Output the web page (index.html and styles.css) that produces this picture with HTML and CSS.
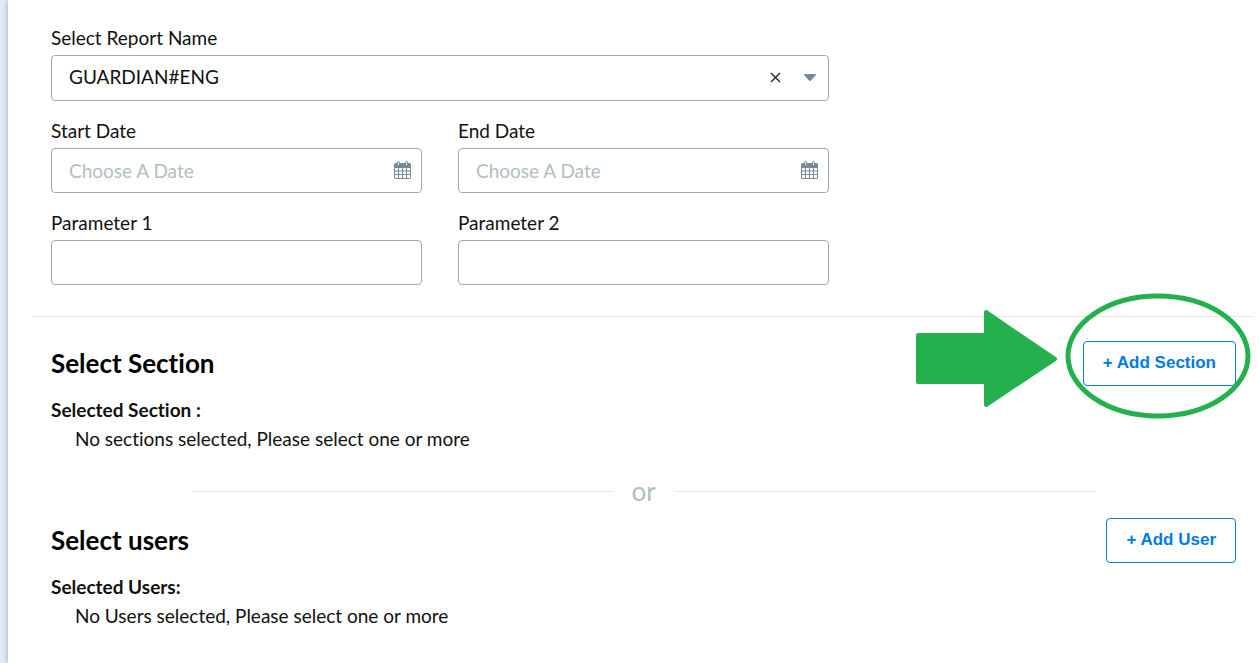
FILE: index.html
```html
<!DOCTYPE html>
<html lang="en">

<head>
    <meta charset="UTF-8" />
    <meta name="viewport" content="width=device-width, initial-scale=1.0" />
    <title>Report</title>
    <link rel="stylesheet" href="styles.css">
</head>

<body>
    <main class="panel">
        <form class="filters">
            <div class="field field-wide">
                <label for="report">Select Report Name</label>
                <div class="control">
                    <select id="report">
                        <option>GUARDIAN#ENG</option>
                    </select>
                    <button class="clear" type="button" aria-label="Clear report">
                        <svg width="11" height="11" viewBox="0 0 11 11" aria-hidden="true">
                            <path d="M1 1l9 9M10 1l-9 9" />
                        </svg>
                    </button>
                    <svg class="caret" width="12" height="7" viewBox="0 0 12 7" aria-hidden="true">
                        <path d="M1 0h10q1.500 .3 .5 1.500L7 6.500q-1 .8-2 0L.5 1.500Q-.5.3 1 0z" />
                    </svg>
                </div>
            </div>
            <div class="field">
                <label for="start">Start Date</label>
                <div class="control">
                    <input id="start" type="text" placeholder="Choose A Date">
                    <svg class="calendar" width="17" height="18" viewBox="0 0 17 18" aria-hidden="true">
                        <use href="#calendar" />
                    </svg>
                </div>
            </div>
            <div class="field">
                <label for="end">End Date</label>
                <div class="control">
                    <input id="end" type="text" placeholder="Choose A Date">
                    <svg class="calendar" width="17" height="18" viewBox="0 0 17 18" aria-hidden="true">
                        <!-- Shared by both date fields -->
                        <g id="calendar">
                            <path fill-rule="evenodd" d="M1.500 2h14q1.500 0 1.500 1.500v13q0 1.500-1.500 1.500h-14Q0 18 0 16.500v-13Q0 2 1.500 2zM1 7v2.500h3V7zM5 7v2.500h3V7zM9 7v2.500h3V7zM13 7v2.500h3V7zM1 10.500v2.500h3v-2.500zM5 10.500v2.500h3v-2.500zM9 10.500v2.500h3v-2.500zM13 10.500v2.500h3v-2.500zM1 14v3h3v-3zM5 14v3h3v-3zM9 14v3h3v-3zM13 14v3h3v-3z" />
                            <rect class="ring" x="3.500" y=".5" width="2" height="4" rx="1" />
                            <rect class="ring" x="11.500" y=".5" width="2" height="4" rx="1" />
                        </g>
                    </svg>
                </div>
            </div>
            <div class="field">
                <label for="param1">Parameter 1</label>
                <input id="param1" type="text">
            </div>
            <div class="field">
                <label for="param2">Parameter 2</label>
                <input id="param2" type="text">
            </div>
        </form>

        <section class="picker picker-first">
            <div class="picker-head">
                <h2>Select Section</h2>
                <div class="marked">
                    <button class="add" type="button">+ Add Section</button>
                    <!-- Arrow and ring pointing at the button -->
                    <svg class="marker" width="336" height="126" viewBox="0 0 336 126" aria-hidden="true">
                        <path class="arrow" d="M3 42h68V19l69 47-69 46V89H3z" />
                        <ellipse cx="243" cy="63" rx="90" ry="60" />
                    </svg>
                </div>
            </div>
            <h3>Selected Section :</h3>
            <p>No sections selected, Please select one or more</p>
        </section>

        <div class="or">or</div>

        <section class="picker">
            <div class="picker-head">
                <h2>Select users</h2>
                <button class="add" type="button">+ Add User</button>
            </div>
            <h3>Selected Users:</h3>
            <p>No Users selected, Please select one or more</p>
        </section>
    </main>
</body>

</html>
```
FILE: styles.css
```css
:root {
    --color-text: rgb(17, 17, 17);
    --color-border: rgb(160, 170, 180);
    --color-muted: rgb(176, 190, 197);
    --color-icon: rgb(120, 138, 150);
    --color-line: rgb(230, 232, 233);
    --color-link: rgb(0, 123, 229);
    --color-marker: rgb(36, 177, 77);
}

* {
    box-sizing: border-box;
}

body {
    background: rgb(224, 237, 249);
    color: var(--color-text);
    font-family: Lato, sans-serif;
    font-size: 19px;
    font-variant-ligatures: none;
    line-height: 29px;
    margin: 0;
    padding-left: 8px;
}

.panel {
    background: rgb(255, 255, 255);
    box-shadow: 0 0 6px rgb(0 0 0 / 0.3);
    min-height: 100vh;
    padding: 26px 5px 24px 25px;
}

/* Two thirds of the panel, 18px gutter on each side */
.filters {
    display: grid;
    grid-template-columns: 1fr 1fr;
    gap: 18px 36px;
    padding: 0 18px;
    width: 66.6667%;
}

.field {
    display: flex;
    flex-direction: column;
    gap: 5px;
}

.field-wide {
    grid-column: span 2;
}

label {
    line-height: 24px;
}

.control {
    position: relative;
}

input,
select {
    appearance: none;
    background: rgb(255, 255, 255);
    border: 1px solid var(--color-border);
    border-radius: 4px;
    color: var(--color-text);
    display: block;
    font: inherit;
    height: 45px;
    padding: 0 17px;
    width: 100%;
}

select {
    height: 46px;
    padding-bottom: 3px;
}

input::placeholder {
    color: var(--color-muted);
    opacity: 1;
}

.control svg {
    display: block;
    fill: var(--color-icon);
    pointer-events: none;
}

.clear {
    background: none;
    border: 0;
    padding: 0;
    position: absolute;
    right: 48px;
    top: 17px;
}

.control .clear svg {
    fill: none;
    stroke: rgb(51, 51, 51);
    stroke-width: 1.5;
}

.caret {
    position: absolute;
    right: 13px;
    top: 19px;
}

.calendar {
    position: absolute;
    right: 11px;
    top: 13px;
}

.control .ring {
    fill: rgb(220, 226, 230);
    stroke: var(--color-icon);
}

.picker {
    padding: 0 18px;
}

.picker-first {
    border-top: 1px solid var(--color-line);
    margin-top: 31px;
    padding-top: 24px;
}

.picker-head {
    align-items: center;
    display: flex;
    justify-content: space-between;
    margin-bottom: 9px;
}

h2 {
    color: rgb(0, 0, 0);
    font-size: 26px;
    margin: 0;
}

h3 {
    font-size: 19px;
    margin: 0;
}

p {
    margin: 0;
    padding-left: 24px;
}

.add {
    background: rgb(255, 255, 255);
    border: 1px solid var(--color-link);
    border-radius: 4px;
    color: var(--color-link);
    display: block;
    font: bold 17px "Liberation Sans", sans-serif;
    height: 45px;
    padding: 0 19px 2px;
}

.marked {
    position: relative;
}

.marker {
    fill: var(--color-marker);
    pointer-events: none;
    position: absolute;
    right: -15px;
    top: -48px;
}

.marker ellipse {
    fill: none;
    stroke: var(--color-marker);
    stroke-width: 5;
}

.arrow {
    stroke: var(--color-marker);
    stroke-linejoin: round;
    stroke-width: 4;
}

/* Word with a line on both sides */
.or {
    align-items: center;
    color: var(--color-muted);
    display: flex;
    font-size: 26px;
    gap: 18px;
    margin: 24px auto 12px;
    width: 74%;
}

.or::before,
.or::after {
    border-top: 1px solid var(--color-line);
    content: "";
    flex: 1;
}
```
